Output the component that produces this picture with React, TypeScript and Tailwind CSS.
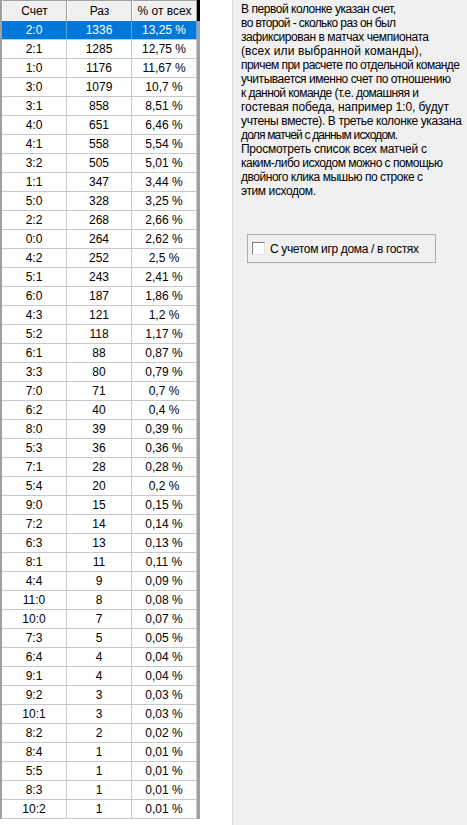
import React, { useLayoutEffect, useRef, useState } from "react";

const rows: [string, string, string][] = [
  ["2:0", "1336", "13,25 %"],
  ["2:1", "1285", "12,75 %"],
  ["1:0", "1176", "11,67 %"],
  ["3:0", "1079", "10,7 %"],
  ["3:1", "858", "8,51 %"],
  ["4:0", "651", "6,46 %"],
  ["4:1", "558", "5,54 %"],
  ["3:2", "505", "5,01 %"],
  ["1:1", "347", "3,44 %"],
  ["5:0", "328", "3,25 %"],
  ["2:2", "268", "2,66 %"],
  ["0:0", "264", "2,62 %"],
  ["4:2", "252", "2,5 %"],
  ["5:1", "243", "2,41 %"],
  ["6:0", "187", "1,86 %"],
  ["4:3", "121", "1,2 %"],
  ["5:2", "118", "1,17 %"],
  ["6:1", "88", "0,87 %"],
  ["3:3", "80", "0,79 %"],
  ["7:0", "71", "0,7 %"],
  ["6:2", "40", "0,4 %"],
  ["8:0", "39", "0,39 %"],
  ["5:3", "36", "0,36 %"],
  ["7:1", "28", "0,28 %"],
  ["5:4", "20", "0,2 %"],
  ["9:0", "15", "0,15 %"],
  ["7:2", "14", "0,14 %"],
  ["6:3", "13", "0,13 %"],
  ["8:1", "11", "0,11 %"],
  ["4:4", "9", "0,09 %"],
  ["11:0", "8", "0,08 %"],
  ["10:0", "7", "0,07 %"],
  ["7:3", "5", "0,05 %"],
  ["6:4", "4", "0,04 %"],
  ["9:1", "4", "0,04 %"],
  ["9:2", "3", "0,03 %"],
  ["10:1", "3", "0,03 %"],
  ["8:2", "2", "0,02 %"],
  ["8:4", "1", "0,01 %"],
  ["5:5", "1", "0,01 %"],
  ["8:3", "1", "0,01 %"],
  ["10:2", "1", "0,01 %"],
];

const lines: [string, number][] = [
  ["В первой колонке указан счет,", 155],
  ["во второй - сколько раз он был", 155],
  ["зафиксирован в матчах чемпионата", 188],
  ["(всех или выбранной команды),", 181],
  ["причем при расчете по отдельной команде", 219],
  ["учитывается именно счет по отношению", 210],
  ["к данной команде (т.е. домашняя и", 178],
  ["гостевая победа, например 1:0, будут", 208],
  ["учтены вместе). В третье колонке указана", 221],
  ["доля матчей с данным исходом.", 157],
  ["Просмотреть список всех матчей с", 186],
  ["каким-либо исходом можно с помощью", 202],
  ["двойного клика мышью по строке с", 182],
  ["этим исходом.", 75],
];

function Fit({ text, w }: { text: string; w: number }) {
  const ref = useRef<HTMLSpanElement>(null);
  const [ls, setLs] = useState(0);
  useLayoutEffect(() => {
    const el = ref.current;
    if (!el) return;
    const natural = el.getBoundingClientRect().width;
    setLs((w - natural) / Math.max(1, text.length - 1));
  }, [text, w]);
  return (
    <span ref={ref} className="inline-block whitespace-nowrap" style={{ letterSpacing: ls }}>
      {text}
    </span>
  );
}

function HeaderCell({ label }: { label: string }) {
  return (
    <div className="w-[65px] h-[21px] flex items-center justify-center bg-[#f0f0f0] border-t border-t-[#a0a0a0] border-l border-l-white border-r border-r-[#a0a0a0] text-black">
      {label}
    </div>
  );
}

export default function App() {
  return (
    <div className="flex w-[467px] h-[825px] bg-white text-[12px] leading-[14px] font-['Liberation_Sans',Arial,sans-serif] overflow-hidden">
      <div className="w-[232px] shrink-0 bg-white">
        <div className="w-[200px] border-l-2 border-l-[#a0a0a0]">
          <div className="flex">
            <HeaderCell label="Счет" />
            <HeaderCell label="Раз" />
            <HeaderCell label="% от всех" />
            <div className="w-[3px] h-[21px] bg-black" />
          </div>
          {rows.map((r, i) => {
            const sel = i === 0;
            return (
              <div key={i} className={sel ? "flex bg-[#0078d7] text-white" : "flex text-black"}>
                {r.map((c, j) => (
                  <div
                    key={j}
                    className={
                      sel
                        ? "w-[65px] h-[19px] flex items-center justify-center border-b border-b-[#c8c8c8] border-r border-r-[#5aa5e5]"
                        : "w-[65px] h-[19px] flex items-center justify-center border-b border-b-[#c8c8c8] border-r border-r-[#c8c8c8]"
                    }
                  >
                    {c}
                  </div>
                ))}
                <div className="w-[3px] h-[19px] bg-[#a0a0a0]" />
              </div>
            );
          })}
        </div>
      </div>
      <div className="flex-1 bg-[#f0f0f0] border-l border-l-[#dadada] pl-[8px] pt-[2px] text-black">
        <div>
          {lines.map(([l, w], i) => (
            <div key={i} className="whitespace-nowrap h-[14px]">
              <Fit text={l} w={w} />
            </div>
          ))}
        </div>
        <div className="mt-[36px] ml-[6px] w-[189px] h-[29px] border border-[#adadad] flex items-center pl-[4px]">
          <div className="w-[13px] h-[13px] bg-white border border-t-[#808080] border-l-[#808080] border-b-[#e3e3e3] border-r-[#e3e3e3]" />
          <span className="ml-[5px]">
            <Fit text="С учетом игр дома / в гостях" w={149} />
          </span>
        </div>
      </div>
    </div>
  );
}
